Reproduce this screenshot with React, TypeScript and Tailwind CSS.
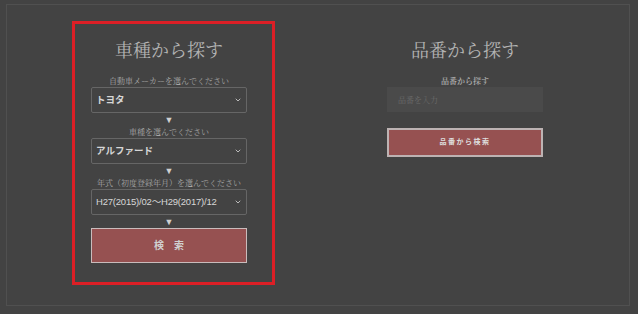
import { ChevronDown } from "lucide-react";

const serif = "font-['Noto_Serif_CJK_JP','Liberation_Serif','Noto_Sans_CJK_JP',serif]";
const sans = "font-['Liberation_Sans','Noto_Sans_CJK_JP',sans-serif]";

function Select({ value, bold }: { value: string; bold?: boolean }) {
  return (
    <div className="flex h-[26px] items-center justify-between rounded-[2px] border border-[#666] bg-[#434343] pl-[4px] pr-[4px]">
      <span
        className={`${sans} whitespace-nowrap text-[9.5px] text-[#d6d6d6] ${bold ? "font-bold" : "tracking-[-0.2px]"}`}
      >
        {value}
      </span>
      <ChevronDown className="h-[8px] w-[8px] shrink-0 text-[#bbb]" strokeWidth={3} />
    </div>
  );
}

function Arrow({ h }: { h: string }) {
  return (
    <div className={`flex ${h} items-center justify-center text-[9px] leading-none text-[#d0d0d0]`}>▼</div>
  );
}

function Label({ children }: { children: string }) {
  return (
    <div className={`${serif} flex h-[13px] items-center justify-center whitespace-nowrap text-[8px] text-[#a8a8a8]`}>{children}</div>
  );
}

export default function App() {
  return (
    <div className="h-[314px] w-[638px] bg-[#434343] pl-[6px] pt-[4px]">
      <div className="flex h-[302px] w-[624px] border border-[#505050] pl-[65px] pt-[16px]">
        {/* car search */}
        <div className="h-[264px] w-[203px] border-[3px] border-[#dc1f26] pl-[16px]">
          <div className="w-[156px]">
            <div className={`${serif} h-[50px] pt-[13px] text-center text-[18px] leading-[24px] text-[#b3b3b3]`}>車種から探す</div>
            <Label>自動車メーカーを選んでください</Label>
            <Select value="トヨタ" bold />
            <Arrow h="h-[12px]" />
            <Label>車種を選んでください</Label>
            <Select value="アルファード" bold />
            <Arrow h="h-[12px]" />
            <Label>年式（初度登録年月）を選んでください</Label>
            <Select value="H27(2015)/02〜H29(2017)/12" />
            <Arrow h="h-[13px]" />
            <button className={`${sans} flex h-[35px] w-[156px] items-center justify-center border border-[#c9bcbc] bg-[#965151] text-[10px] font-bold tracking-[10px] text-[#d0d0d0]`}>
              <span className="pl-[10px]">検索</span>
            </button>
          </div>
        </div>

        {/* part number search */}
        <div className="ml-[112px] w-[156px] pt-[3px]">
          <div className={`${serif} h-[50px] pt-[13px] text-center text-[18px] leading-[24px] text-[#b3b3b3]`}>品番から探す</div>
          <div className={`${serif} flex h-[13px] items-center justify-center text-[8px] font-semibold text-[#b0b0b0]`}>品番から探す</div>
          <div className={`${serif} flex h-[25px] items-center bg-[#4a4a4a] pl-[11px] text-[8px] text-[#6a6a6a]`}>品番を入力</div>
          <button className={`${sans} mt-[16px] flex h-[29px] w-[156px] items-center justify-center border-2 border-[#bdb3b3] bg-[#965151] text-[7px] font-bold tracking-[1.5px] text-[#dedede]`}>
            品番から検索
          </button>
        </div>
      </div>
    </div>
  );
}
